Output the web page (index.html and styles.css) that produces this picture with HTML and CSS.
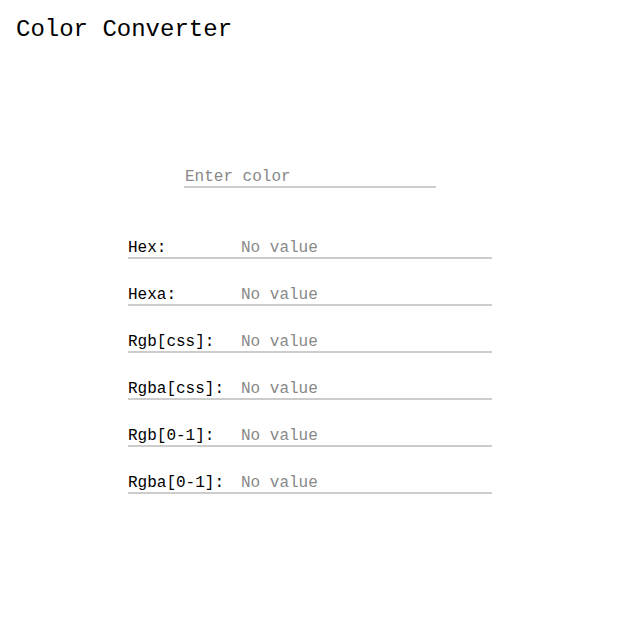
FILE: index.html
```html
<!DOCTYPE html>
<html>
<head>
<meta charset="utf-8">
<title>Color Converter</title>
<link rel="stylesheet" href="styles.css">
</head>
<body>
<h1 class="title">Color Converter</h1>
<main class="converter">
  <input class="color-input" type="text" placeholder="Enter color">
  <div class="rows">
    <div class="row"><span class="label">Hex:</span><span class="value">No value</span></div>
    <div class="row"><span class="label">Hexa:</span><span class="value">No value</span></div>
    <div class="row"><span class="label">Rgb[css]:</span><span class="value">No value</span></div>
    <div class="row"><span class="label">Rgba[css]:</span><span class="value">No value</span></div>
    <div class="row"><span class="label">Rgb[0-1]:</span><span class="value">No value</span></div>
    <div class="row"><span class="label">Rgba[0-1]:</span><span class="value">No value</span></div>
  </div>
</main>
</body>
</html>
```
FILE: styles.css
```css
html, body {
  background: #fff;
}
body {
  margin: 0;
  padding: 16px;
  font-family: "Liberation Mono", "Courier New", monospace;
  color: #000;
}
.title {
  margin: 0;
  font-size: 24px;
  font-weight: normal;
  line-height: 27px;
}
.converter {
  display: flex;
  flex-direction: column;
  align-items: center;
  margin-top: 125px;
}
.color-input {
  width: 252px;
  box-sizing: border-box;
  border: none;
  border-bottom: 2px solid #ccc;
  padding: 0 1px;
  margin: 0;
  font-family: "Liberation Mono", "Courier New", monospace;
  font-size: 16px;
  line-height: 18px;
  height: 20px;
  outline: none;
  background: transparent;
  color: #000;
}
.color-input::placeholder {
  color: #888;
}
.rows {
  display: flex;
  flex-direction: column;
  gap: 27px;
  margin-top: 51px;
  width: 364px;
}
.row {
  display: flex;
  font-size: 16px;
  line-height: 18px;
  border-bottom: 2px solid #ccc;
}
.label {
  width: 113px;
  flex: none;
  color: #000;
}
.value {
  color: #888;
}
```
